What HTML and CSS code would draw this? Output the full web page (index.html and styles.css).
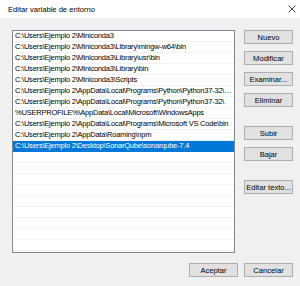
FILE: index.html
```html
<!DOCTYPE html>
<html lang="es">
<head>
    <meta charset="UTF-8">
    <title>Editar variable de entorno</title>
    <link rel="stylesheet" href="styles.css">
</head>
<body>
    <div class="window">
        <div class="titlebar">
            <span class="title">Editar variable de entorno</span>
            <svg class="close" width="8" height="8" viewBox="0 0 8 8">
                <path d="M0.5 0.5 L7.5 7.5 M7.5 0.5 L0.5 7.5" stroke="#333" stroke-width="0.9" fill="none"/>
            </svg>
        </div>

        <div class="content">
            <div class="main">
                <div class="list">
                    <div class="row">C:\Users\Ejemplo 2\Miniconda3</div>
                    <div class="row">C:\Users\Ejemplo 2\Miniconda3\Library\mingw-w64\bin</div>
                    <div class="row">C:\Users\Ejemplo 2\Miniconda3\Library\usr\bin</div>
                    <div class="row">C:\Users\Ejemplo 2\Miniconda3\Library\bin</div>
                    <div class="row">C:\Users\Ejemplo 2\Miniconda3\Scripts</div>
                    <div class="row">C:\Users\Ejemplo 2\AppData\Local\Programs\Python\Python37-32\S...</div>
                    <div class="row">C:\Users\Ejemplo 2\AppData\Local\Programs\Python\Python37-32\</div>
                    <div class="row">%USERPROFILE%\AppData\Local\Microsoft\WindowsApps</div>
                    <div class="row">C:\Users\Ejemplo 2\AppData\Local\Programs\Microsoft VS Code\bin</div>
                    <div class="row">C:\Users\Ejemplo 2\AppData\Roaming\npm</div>
                    <div class="row selected">C:\Users\Ejemplo 2\Desktop\SonarQube\sonarqube-7.4</div>
                    <div class="row"></div>
                    <div class="row"></div>
                    <div class="row"></div>
                    <div class="row"></div>
                    <div class="row"></div>
                    <div class="row"></div>
                    <div class="row"></div>
                    <div class="row"></div>
                    <div class="row"></div>
                    <div class="row"></div>
                </div>

                <div class="side">
                    <button class="btn">Nuevo</button>
                    <button class="btn">Modificar</button>
                    <button class="btn">Examinar...</button>
                    <button class="btn">Eliminar</button>
                    <button class="btn gap-top">Subir</button>
                    <button class="btn">Bajar</button>
                    <button class="btn gap-top-lg">Editar texto...</button>
                </div>
            </div>

            <div class="footer">
                <button class="btn">Aceptar</button>
                <button class="btn">Cancelar</button>
            </div>
        </div>
    </div>
</body>
</html>
```

FILE: styles.css
```css
html, body {
    margin: 0;
    padding: 0;
}
body {
    width: 300px;
    height: 286px;
    overflow: hidden;
    background-color: #f0f0f0;
    font-family: "Liberation Sans", Arial, sans-serif;
    font-size: 7.5px;
    color: #000;
}
.window {
    height: 286px;
    display: flex;
    flex-direction: column;
}
.titlebar {
    height: 18px;
    background-color: #fff;
    display: flex;
    align-items: center;
    justify-content: space-between;
    padding: 0 4px 0 8px;
    flex-shrink: 0;
}
.title {
    font-size: 7.6px;
    color: #000;
}
.close {
    display: block;
}
.content {
    flex: 1;
    padding: 12px 7px 0 12px;
    display: flex;
    flex-direction: column;
}
.main {
    display: flex;
    gap: 9px;
}
.list {
    width: 221px;
    height: 221px;
    background-color: #fff;
    border: 1px solid #828790;
    overflow: hidden;
}
.row {
    height: 11px;
    line-height: 10px;
    padding: 0 1px 0 2px;
    border-bottom: 1px solid #f2f2f2;
    box-sizing: border-box;
    white-space: nowrap;
    overflow: hidden;
    text-overflow: ellipsis;
    letter-spacing: -0.22px;
}
.row.selected {
    background-color: #0078d7;
    color: #fff;
    border-bottom-color: #0078d7;
}
.side {
    display: flex;
    flex-direction: column;
    gap: 7px;
    width: 49px;
}
.btn {
    height: 14px;
    width: 49px;
    margin: 0;
    padding: 0;
    font-family: inherit;
    font-size: 7.6px;
    color: #000;
    background-color: #e1e1e1;
    border: 1px solid #adadad;
    white-space: nowrap;
}
.gap-top {
    margin-top: 12px;
}
.gap-top-lg {
    margin-top: 12px;
}
.footer {
    display: flex;
    justify-content: flex-end;
    gap: 6px;
    margin-top: 10px;
}
```
